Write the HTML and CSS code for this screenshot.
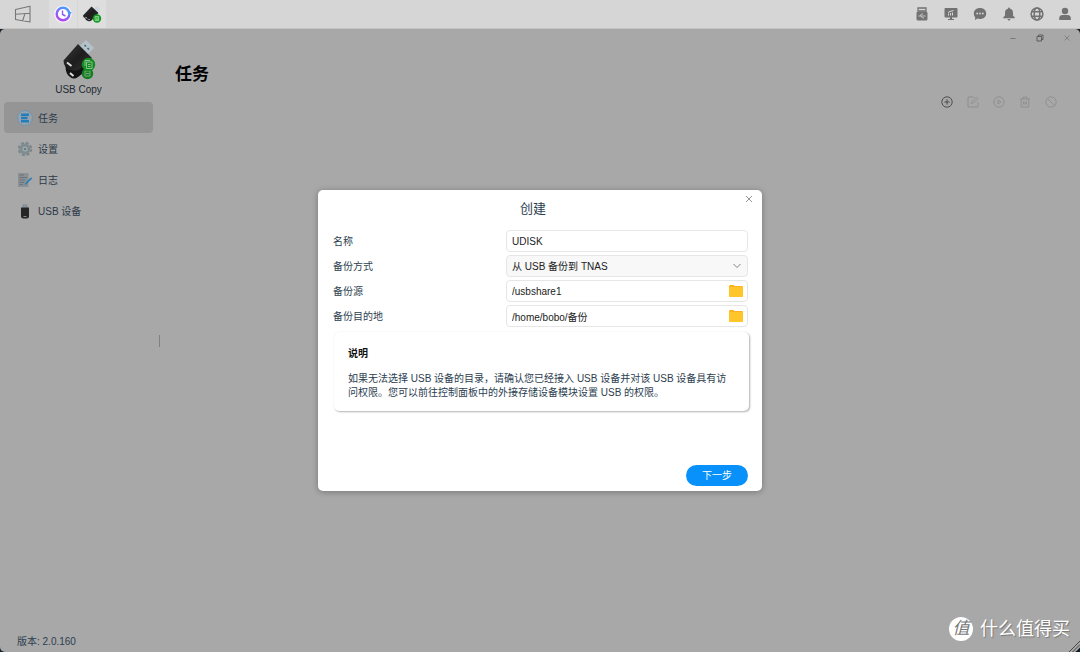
FILE: index.html
```html
<!DOCTYPE html>
<html lang="zh-CN">
<head>
  <meta charset="UTF-8">
  <meta name="viewport" content="width=device-width, initial-scale=1">
  <title>USB Copy</title>
  <link rel="stylesheet" href="styles.css">
</head>
<body>
  <!-- shared drawings -->
  <svg width="0" height="0" class="defs" aria-hidden="true">
    <defs>
      <linearGradient id="stick" x1="0" y1="0" x2="1" y2="1">
        <stop offset="0" stop-color="#3a3a3a"/>
        <stop offset="0.5" stop-color="#1d1d1d"/>
        <stop offset="1" stop-color="#333"/>
      </linearGradient>
      <linearGradient id="clock" x1="0.7" y1="0" x2="0.3" y2="1">
        <stop offset="0" stop-color="#4a9bff"/>
        <stop offset="0.5" stop-color="#8566fb"/>
        <stop offset="1" stop-color="#b545f0"/>
      </linearGradient>
      <symbol id="folder" viewBox="0 0 16 14">
        <path d="M1 2.500Q1 1 2.200 1H5.500L6.500 2H14Q15 2 15 3V12Q15 13 14 13H2Q1 13 1 12Z" fill="#fdb022"/>
        <path d="M1 4Q1 3 2 3H14Q15 3 15 4V12Q15 13 14 13H2Q1 13 1 12Z" fill="#ffc629"/>
      </symbol>
    </defs>
  </svg>

  <header class="topbar">
    <div class="topbar-apps">
      <button class="app-button" aria-label="桌面">
        <svg width="18" height="18" viewBox="0 0 18 18" fill="none" stroke="#777" stroke-width="1.100" stroke-linejoin="round">
          <path d="M1.500 4.500 16 1.200V17L1.500 14.500ZM1.500 9.200 16 8.200M11 8.600 8.500 16"/>
        </svg>
      </button>
      <button class="app-button open" aria-label="备份">
        <svg width="18" height="18" viewBox="0 0 18 18">
          <circle cx="9" cy="9" r="8.800" fill="#f3f2fb"/>
          <circle cx="9" cy="9" r="6.300" fill="#fff" stroke="url(#clock)" stroke-width="2.400"/>
          <path d="M14 5.500 17.800 7.500 14.500 10.500Z" fill="#4f98ff"/>
          <path d="M8.500 5.500V9.500L11.500 11" fill="none" stroke="#8a5cf5" stroke-width="1.400"/>
        </svg>
      </button>
      <button class="app-button open" aria-label="USB Copy">
        <svg width="20" height="18" viewBox="0 0 20 18">
          <path d="M12 3.500 15.200 1 18.500 4 16 7Z" fill="#cbd7de"/>
          <path d="M1 10.500 9.500 1.500 16.500 8 10 15Q8 17 6 16Q3.500 15.500 3 13Q1 12.500 1 10.500Z" fill="url(#stick)"/>
          <path d="M3.500 12 5 13.500M6.500 14 7.500 15" stroke="#ddd"/>
          <circle cx="15" cy="13.500" r="4.200" fill="#139a20"/>
          <path d="M13.200 11.500H16.500V15.600H13.200ZM14 13H16M14 14.400H16" fill="none" stroke="#b5e8b5" stroke-width="0.700"/>
        </svg>
      </button>
    </div>
    <div class="topbar-status">
      <button class="status-button" aria-label="USB">
        <svg width="14" height="14" viewBox="0 0 14 14">
          <path d="M3 1H11V4H3Z" fill="none" stroke="#727272" stroke-width="1.300"/>
          <rect x="1.500" y="4.500" width="11" height="9" rx="1.500" fill="#727272"/>
          <path d="M3.500 9H10.500M5 9 6.500 7H8M6 9 7.500 11H9" stroke="#d6d6d6" stroke-width="0.800" fill="none"/>
        </svg>
      </button>
      <button class="status-button" aria-label="监控">
        <svg width="14" height="14" viewBox="0 0 14 14">
          <path d="M1.500 1H12.500Q13.500 1 13.500 2V9.500Q13.500 10.500 12.500 10.500H8V12H10V13H4V12H6V10.500H1.500Q.5 10.500 .5 9.500V2Q.5 1 1.500 1Z" fill="#727272"/>
          <path d="M4.500 8.500V6.500M6.500 8.500V6M8.500 8.500V5.500M4 5.500 6 4.500 9.500 3.500" stroke="#d6d6d6" fill="none"/>
        </svg>
      </button>
      <button class="status-button" aria-label="消息">
        <svg width="14" height="14" viewBox="0 0 14 14">
          <path d="M7 1C10.500 1 13.200 3.200 13.200 6.500S10.500 12 7 12Q5.500 12 4.500 11.600L2 13 2.200 10.300C1.300 9.300 .8 8 .8 6.500.8 3.200 3.500 1 7 1Z" fill="#727272"/>
          <g fill="#d6d6d6"><circle cx="4.200" cy="6.500" r=".9"/><circle cx="7" cy="6.500" r=".9"/><circle cx="9.800" cy="6.500" r=".9"/></g>
        </svg>
      </button>
      <button class="status-button" aria-label="通知">
        <svg width="14" height="14" viewBox="0 0 14 14" fill="#727272">
          <path d="M7 .5Q8 .5 8 1.700C10.300 2.200 11 4 11 6V8.500L12.800 10.500V11.300H1.200V10.500L3 8.500V6C3 4 3.700 2.200 6 1.700Q6 .5 7 .5Z"/>
          <path d="M5.500 12H8.500Q8 13.500 7 13.500T5.500 12Z"/>
        </svg>
      </button>
      <button class="status-button" aria-label="语言">
        <svg width="14" height="14" viewBox="0 0 14 14" fill="none" stroke="#727272" stroke-width="1.500">
          <circle cx="7" cy="7" r="5.900"/>
          <ellipse cx="7" cy="7" rx="2.800" ry="5.900"/>
          <path d="M1.500 4.800H12.500M1.500 9.200H12.500"/>
        </svg>
      </button>
      <button class="status-button" aria-label="用户">
        <svg width="14" height="14" viewBox="0 0 14 14" fill="#727272">
          <circle cx="7" cy="4" r="3.200"/>
          <path d="M1.200 13V11Q1.500 8 4.500 8H9.500Q12.500 8 12.800 11V13Z"/>
        </svg>
      </button>
    </div>
  </header>

  <div class="desktop">
    <div class="window">
      <aside class="sidebar">
        <div class="brand">
          <svg width="34" height="42" viewBox="0 0 34 42">
            <path d="M17 7.500 24 1 32 9 25 16Z" fill="#b5c1c8"/>
            <path d="M22.500 6 24 7.500M25.500 9 27 10.500" stroke="#4c6678" stroke-width="1.600"/>
            <path d="M3.500 27 15 15 28 29 16 38Q12 41 8 38Q3.500 35 3.500 27Z" fill="#141414"/>
            <path d="M1.500 21.500 16 5 30 19 18 30Q14 33 9 31Q1.500 29 1.500 21.500Z" fill="url(#stick)"/>
            <path d="M5 23.500 9.500 27M8 34 11.500 37" stroke="#ddd" stroke-width="2"/>
            <circle cx="25.500" cy="34.500" r="5.700" fill="#127c20"/>
            <path d="M23 32H28V37H23ZM24 34.500H27" fill="none" stroke="#79a97d"/>
            <circle cx="26.500" cy="25.500" r="6.700" fill="#118d20"/>
            <path d="M24.500 23H30V29.500H24.500ZM23 27V21.500H28M26 25.500H28.500M26 27.500H28.500" fill="none" stroke="#a9c9a9" stroke-width=".8"/>
          </svg>
          <span>USB Copy</span>
        </div>
        <nav class="menu">
          <a class="menu-item active" href="#tasks">
            <svg width="16" height="16" viewBox="0 0 16 16">
              <circle cx="8" cy="8" r="7.400" fill="#9aa3aa" stroke="#5f93b9" stroke-width=".8"/>
              <path d="M4 3.500H12V6H4ZM4 6.800H10.500V9.200H4ZM4 10H12V12.500H4Z" fill="#217ebd"/>
            </svg>
            <span>任务</span>
          </a>
          <a class="menu-item" href="#settings">
            <svg width="16" height="16" viewBox="0 0 16 16">
              <circle cx="8" cy="8" r="6.200" fill="none" stroke="#7b888b" stroke-width="2" stroke-dasharray="3 1.870"/>
              <circle cx="8" cy="8" r="4" fill="#a3aeb0" stroke="#808d90" stroke-width="3"/>
              <circle cx="8" cy="8" r="1.300" fill="#6d7b80"/>
            </svg>
            <span>设置</span>
          </a>
          <a class="menu-item" href="#logs">
            <svg width="16" height="16" viewBox="0 0 16 16">
              <path d="M1 1H11.500V15H1Z" fill="#8a9094"/>
              <path d="M2.500 3H7M2.500 5.500H10M2.500 8H8M2.500 10.500H7M2.500 12.500H6" stroke="#666d72" stroke-width=".8"/>
              <path d="M7.500 13 8.200 11.200 14 5.300 15.300 6.500 9.300 12.300Z" fill="#287fb8"/>
            </svg>
            <span>日志</span>
          </a>
          <a class="menu-item" href="#usb">
            <svg width="16" height="16" viewBox="0 0 16 16">
              <path d="M5.500 1H10.500V5H5.500Z" fill="#8e979c"/>
              <path d="M6.700 2.500V4M9.300 2.500V4" stroke="#7b868d"/>
              <path d="M4 4.500H12V13Q12 15.500 9.500 15.500H6.500Q4 15.500 4 13Z" fill="#252525"/>
              <path d="M6.500 13.500H9.500" stroke="#888"/>
            </svg>
            <span>USB 设备</span>
          </a>
        </nav>
        <div class="version">版本: 2.0.160</div>
      </aside>
      <div class="splitter"></div>

      <main class="content">
        <div class="window-controls">
          <button aria-label="最小化">
            <svg width="8" height="8" viewBox="0 0 8 8" fill="none" stroke="#777"><path d="M1.500 4.500H6.500"/></svg>
          </button>
          <button aria-label="还原">
            <svg width="8" height="8" viewBox="0 0 8 8" fill="none" stroke="#555" stroke-width=".9"><path d="M1 2.500H5.500V7H1ZM2.500 2.500V1H7V5.500H5.500"/></svg>
          </button>
          <button aria-label="关闭">
            <svg width="8" height="8" viewBox="0 0 8 8" fill="none" stroke="#808080" stroke-width=".9"><path d="M1.500 1.500 6.500 6.500M6.500 1.500 1.500 6.500"/></svg>
          </button>
        </div>
        <h1>任务</h1>
        <div class="toolbar">
          <button class="tool enabled" aria-label="创建">
            <svg viewBox="0 0 12 12"><circle cx="6" cy="6" r="5.200"/><path d="M6 3.300V8.700M3.300 6H8.700"/></svg>
          </button>
          <button class="tool" aria-label="编辑">
            <svg viewBox="0 0 12 12"><path d="M6.500 1H1V11H11V6M4.500 7.500 5 5.500 9.500 1 11 2.500 6.500 7Z"/></svg>
          </button>
          <button class="tool" aria-label="启动">
            <svg viewBox="0 0 12 12"><circle cx="6" cy="6" r="5.200"/><path d="M5 4 8 6 5 8Z"/></svg>
          </button>
          <button class="tool" aria-label="删除">
            <svg viewBox="0 0 12 12"><path d="M1 3H11M4 3V1H8V3M2.200 3V11H9.800V3M4.500 8.500V5.500M6 8.500V5.500M7.500 8.500V5.500"/></svg>
          </button>
          <button class="tool" aria-label="停止">
            <svg viewBox="0 0 12 12"><circle cx="6" cy="6" r="5.200"/><path d="M2.300 2.300 9.700 9.700"/></svg>
          </button>
        </div>
      </main>

      <div class="overlay">
        <form class="dialog" role="dialog" aria-labelledby="dialogTitle">
          <div class="dialog-header">
            <h2 id="dialogTitle">创建</h2>
            <button type="button" class="dialog-close" aria-label="关闭">
              <svg width="8" height="8" viewBox="0 0 8 8" fill="none" stroke="#888" stroke-width=".9"><path d="M1 1 7 7M7 1 1 7"/></svg>
            </button>
          </div>
          <div class="form-row">
            <label for="name">名称</label>
            <div class="field"><input id="name" type="text" value="UDISK"></div>
          </div>
          <div class="form-row">
            <label for="mode">备份方式</label>
            <div class="field select-field">
              <select id="mode"><option>从 USB 备份到 TNAS</option></select>
              <svg class="arrow" width="8" height="6" viewBox="0 0 8 6" fill="none" stroke="#777" stroke-width=".9"><path d="M.5 1 4 4.500 7.500 1"/></svg>
            </div>
          </div>
          <div class="form-row">
            <label for="source">备份源</label>
            <div class="field">
              <input id="source" type="text" value="/usbshare1">
              <button type="button" class="browse" aria-label="选择备份源"><svg width="16" height="14"><use href="#folder"/></svg></button>
            </div>
          </div>
          <div class="form-row">
            <label for="target">备份目的地</label>
            <div class="field">
              <input id="target" type="text" value="/home/bobo/备份">
              <button type="button" class="browse" aria-label="选择备份目的地"><svg width="16" height="14"><use href="#folder"/></svg></button>
            </div>
          </div>
          <div class="note">
            <h3>说明</h3>
            <p>如果无法选择 USB 设备的目录，请确认您已经接入 USB 设备并对该 USB 设备具有访问权限。您可以前往控制面板中的外接存储设备模块设置 USB 的权限。</p>
          </div>
          <div class="dialog-footer">
            <button type="button" class="next">下一步</button>
          </div>
        </form>
      </div>
    </div>

    <div class="watermark"><span class="watermark-logo">值</span>什么值得买</div>
    <svg class="grip" width="12" height="12" viewBox="0 0 12 12">
      <path d="M12 7.500V12H7.500Z" fill="#111c28"/>
      <path d="M1 12 12 1M4.500 12 12 4.500" stroke="#444"/>
    </svg>
  </div>
</body>
</html>
```
FILE: styles.css
```css
* {
  box-sizing: border-box;
}
body {
  margin: 0;
  min-height: 100vh;
  display: flex;
  flex-direction: column;
  background: #14212b;
  color: #2c3e50;
  font-family: "Liberation Sans", "Noto Sans CJK SC", sans-serif;
  font-size: 10px;
  line-height: 14px;
}
button {
  border: none;
  padding: 0;
  background: none;
  font: inherit;
  cursor: pointer;
}
svg {
  display: block;
}
h1, h2, h3, p {
  margin: 0;
}
.defs {
  position: absolute;
}

/* top bar */
.topbar {
  height: 29px;
  display: flex;
  justify-content: space-between;
  background: #d6d6d6;
  border-bottom: 1px solid #c4c4c4;
}
.topbar-apps {
  display: flex;
  padding-left: 8px;
  gap: 1px;
}
.app-button {
  width: 28px;
  display: flex;
  align-items: center;
  justify-content: center;
}
.app-button:first-child {
  width: 30px;
  margin-right: 10px;
}
.app-button.open {
  background: #dedede;
}
.topbar-status {
  display: flex;
  align-items: center;
  gap: 15px;
  padding-right: 8px;
}
.status-button {
  width: 14px;
  height: 14px;
}
.status-button:nth-child(n+5) {
  margin-left: -1px;
}

/* application window */
.desktop {
  flex: 1;
  display: flex;
  position: relative;
}
.window {
  flex: 1;
  display: flex;
  position: relative;
  background: #a8a8a8;
  border-radius: 5px;
}
.sidebar {
  width: 158px;
  display: flex;
  flex-direction: column;
  padding: 10px 5px 3px 4px;
}
.brand {
  display: flex;
  flex-direction: column;
  align-items: center;
  gap: 2px;
  color: #222b33;
}
.menu {
  display: flex;
  flex-direction: column;
  margin-top: 5px;
}
.menu-item {
  height: 31px;
  display: flex;
  align-items: center;
  gap: 5px;
  padding-top: 1px;
  padding-left: 13px;
  border-radius: 4px;
  color: #2c3a48;
  text-decoration: none;
}
.menu-item span {
  padding-top: 1px;
}
.menu-item.active {
  background: #959595;
}
.version {
  margin-top: auto;
  padding-left: 13px;
}
.splitter {
  align-self: center;
  width: 2px;
  height: 12px;
  border-right: 1px solid #808080;
}
.content {
  flex: 1;
  padding: 4px 9px 0 15px;
}
.window-controls {
  display: flex;
  justify-content: flex-end;
  gap: 19px;
}
.window-controls button {
  width: 8px;
  height: 10px;
}
.content h1 {
  margin-top: 20px;
  color: #000;
  font-size: 17px;
  line-height: 24px;
}
.toolbar {
  display: flex;
  justify-content: flex-end;
  gap: 14px;
  margin-top: 9px;
  padding-right: 14px;
}
.tool {
  width: 12px;
  height: 12px;
}
.tool svg {
  fill: none;
  stroke: #8d8d8d;
  stroke-width: 0.9;
}
.tool.enabled svg {
  stroke: #444;
}

/* dialog */
.overlay {
  position: absolute;
  inset: 0;
  display: flex;
  align-items: center;
  justify-content: center;
}
.dialog {
  width: 444px;
  max-width: 100%;
  padding: 4px 14px 5px 15px;
  background: #fff;
  border-radius: 5px;
  box-shadow: 0 1px 6px rgba(0, 0, 0, 0.3);
}
.dialog-header {
  display: flex;
  align-items: flex-start;
  margin-bottom: 11px;
}
.dialog-header h2 {
  flex: 1;
  padding-top: 5px;
  font-size: 13px;
  font-weight: normal;
  line-height: 20px;
  text-align: center;
}
.dialog-close {
  padding: 1px 0 0 12px;
  margin-right: -5px;
}
.form-row {
  display: flex;
  align-items: center;
  justify-content: space-between;
  margin-top: 3px;
}
.form-row label {
  padding-top: 1px;
}
.field {
  width: 242px;
  height: 22px;
  display: flex;
  align-items: center;
  border: 1px solid #e6e6e6;
  border-radius: 4px;
}
.field input, .field select {
  flex: 1;
  min-width: 0;
  height: 20px;
  padding: 1px 5px 0;
  border: none;
  background: none;
  color: #222;
  font: inherit;
  outline: none;
  appearance: none;
}
.select-field {
  position: relative;
  background: #f8f8f8;
}
.arrow {
  position: absolute;
  right: 6px;
  pointer-events: none;
}
.browse {
  margin-right: 3px;
}
.note {
  margin-top: 5px;
  margin-right: -1px;
  margin-left: 1px;
  padding: 15px 14px 11px;
  border-radius: 5px;
  box-shadow: 1px 1px 2px rgba(0, 0, 0, 0.3), 0 0 1px rgba(0, 0, 0, 0.1);
}
.note h3 {
  margin-bottom: 11px;
  color: #111;
  font-size: 10px;
}
.dialog-footer {
  display: flex;
  justify-content: flex-end;
  margin-top: 54px;
}
.next {
  width: 62px;
  height: 21px;
  padding-top: 1px;
  border-radius: 11px;
  background: #0891fa;
  color: #fff;
}

/* lies over the bottom right corner */
.watermark {
  position: absolute;
  right: 10px;
  bottom: 10px;
  display: flex;
  align-items: center;
  gap: 7px;
  color: #fff;
  font-size: 18px;
  line-height: 26px;
  text-shadow: 1px 1px 1px rgba(0, 0, 0, 0.3);
}
.watermark-logo {
  width: 24px;
  height: 24px;
  border-radius: 50%;
  background: #fff;
  color: #777;
  font-size: 17px;
  font-style: italic;
  line-height: 23px;
  text-align: center;
  text-shadow: none;
}
.grip {
  position: absolute;
  right: 0;
  bottom: 0;
}
```
